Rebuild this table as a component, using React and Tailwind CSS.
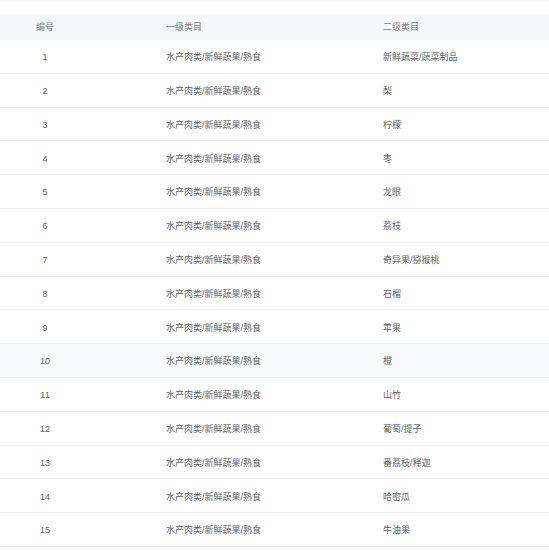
const rows = [
  '新鲜蔬菜/蔬菜制品', '梨', '柠檬', '枣', '龙眼', '荔枝', '奇异果/猕猴桃', '石榴',
  '苹果', '橙', '山竹', '葡萄/提子', '番荔枝/释迦', '哈密瓜', '牛油果',
]

export default function App() {
  return (
    <div className="w-[549px] h-[550px] overflow-hidden bg-white text-[9px] text-[#606266] font-['Liberation_Sans','Noto_Sans_CJK_SC',sans-serif]">
      <div className="h-[2px] bg-[#f5f7fa]" />
      <div className="h-[12px]" />
      {/* 表头 */}
      <div className="grid grid-cols-[90px_217px_1fr] h-[26px] items-center pt-[2px] bg-[#f5f7fa] text-[#7a7d83]">
        <div className="text-center">编号</div>
        <div className="pl-[76px]">一级类目</div>
        <div className="pl-[76px]">二级类目</div>
      </div>
      {/* 数据行 */}
      {rows.map((name, i) => (
        <div key={i}
          className={`grid grid-cols-[90px_217px_1fr] h-[33.8px] items-center pt-[3px] border-b border-[#ebeef5]
            ${i === 9 ? 'bg-[#f8fafc]' : 'bg-white'}`}>
          <div className="text-center">{i + 1}</div>
          <div className="pl-[76px]">水产肉类/新鲜蔬果/熟食</div>
          <div className="pl-[76px]">{name}</div>
        </div>
      ))}
    </div>
  )
}
